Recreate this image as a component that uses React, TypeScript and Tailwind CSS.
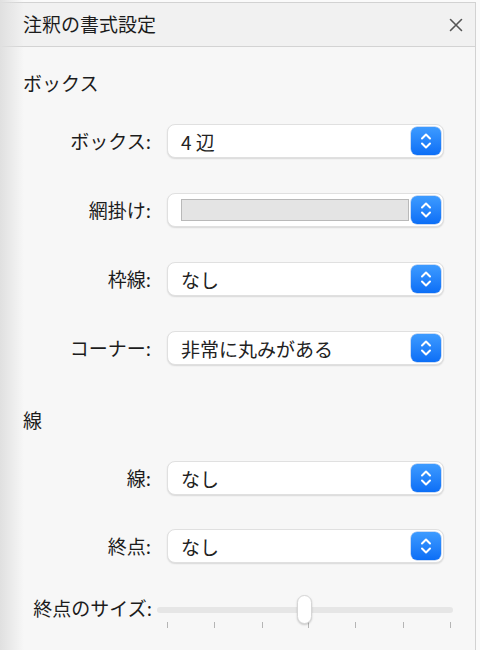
import React from "react";

const font = {
  fontFamily: '"Noto Sans CJK JP", "Noto Sans", sans-serif',
};

function Stepper() {
  return (
    <div className="flex h-[28px] w-[30px] items-center justify-center rounded-[6px] bg-gradient-to-b from-[#3d9bff] to-[#0b6ef6] shadow-[0_0_0_0.5px_rgba(0,80,200,0.4)]">
      <svg width="14" height="20" viewBox="0 0 14 20" fill="none">
        <path d="M3 7.5 L7 3.5 L11 7.5" stroke="white" strokeWidth="2" strokeLinecap="round" strokeLinejoin="round" />
        <path d="M3 12.5 L7 16.5 L11 12.5" stroke="white" strokeWidth="2" strokeLinecap="round" strokeLinejoin="round" />
      </svg>
    </div>
  );
}

function SelectBox({ children }: { children?: React.ReactNode }) {
  return (
    <div className="flex h-[34px] w-[277px] items-center rounded-[8px] border border-[#e0e0e0] bg-white pl-[13px] pr-[2px] shadow-[0_1px_1.5px_rgba(0,0,0,0.12)]">
      <div className="flex-1 text-[19px] leading-none text-[#222]">{children}</div>
      <Stepper />
    </div>
  );
}

function Row({ label, children }: { label: string; children?: React.ReactNode }) {
  return (
    <div className="flex h-[34px] items-center">
      <div className="w-[152px] pr-[1px] text-right text-[19px] text-[#1c1c1c]">{label}</div>
      <div className="ml-[15px]">
        <SelectBox>{children}</SelectBox>
      </div>
    </div>
  );
}

function Slider() {
  const ticks = [10, 57, 105, 151, 198, 246, 293];
  return (
    <div className="relative h-[34px] w-[296px]">
      <div className="absolute left-0 right-0 top-[11px] h-[6px] rounded-full bg-[#e6e6e6]" />
      {ticks.map((x) => (
        <div key={x} className="absolute top-[26px] h-[6px] w-[1px] bg-[#b5b5b5]" style={{ left: x }} />
      ))}
      <div className="absolute left-[140px] top-[-1px] h-[29px] w-[15px] rounded-[8px] border border-[#d6d6d6] bg-white shadow-[0_1px_2px_rgba(0,0,0,0.2)]" />
    </div>
  );
}

export default function App() {
  return (
    <div className="relative h-[650px] w-[480px] overflow-hidden bg-[#fafafa]" style={font}>
      <div className="absolute inset-y-0 left-0 w-[24px] bg-gradient-to-r from-[#e0e0e0] to-transparent" />
      <div className="mt-[2px] h-[648px] w-[476px] border-r border-t border-[#d2d2d2] bg-[#f7f7f7]">
        <div className="flex h-[44px] items-center justify-between border-b border-[#d3d3d3] bg-[#f1f1f1] pl-[23px] pr-[12px]">
          <span className="text-[19px] text-[#1c1c1c]">注釈の書式設定</span>
          <svg width="14" height="14" viewBox="0 0 14 14">
            <path d="M1.5 1.5 L12.5 12.5 M12.5 1.5 L1.5 12.5" stroke="#555" strokeWidth="1.6" strokeLinecap="round" />
          </svg>
        </div>

        <div className="relative">
          <div className="pl-[23px] pt-[24px] text-[19px] leading-[24px] text-[#1c1c1c]">ボックス</div>
          <div className="mt-[29px] flex flex-col gap-[35px]">
            <Row label="ボックス:">4 辺</Row>
            <Row label="網掛け:">
              <div className="h-[22px] w-[228px] border border-[#b9b9b9] bg-[#e4e4e4]" />
            </Row>
            <Row label="枠線:">なし</Row>
            <Row label="コーナー:">非常に丸みがある</Row>
          </div>

          <div className="pl-[23px] pt-[43px] text-[19px] leading-[24px] text-[#1c1c1c]">線</div>
          <div className="mt-[29px] flex flex-col gap-[34px]">
            <Row label="線:">なし</Row>
            <Row label="終点:">なし</Row>
            <div className="-mt-[6px] flex h-[34px] items-center">
              <div className="w-[152px] text-right text-[19px] text-[#1c1c1c]">終点のサイズ:</div>
              <div className="ml-[5px] mt-[10px]">
                <Slider />
              </div>
            </div>
          </div>
        </div>
      </div>
    </div>
  );
}
